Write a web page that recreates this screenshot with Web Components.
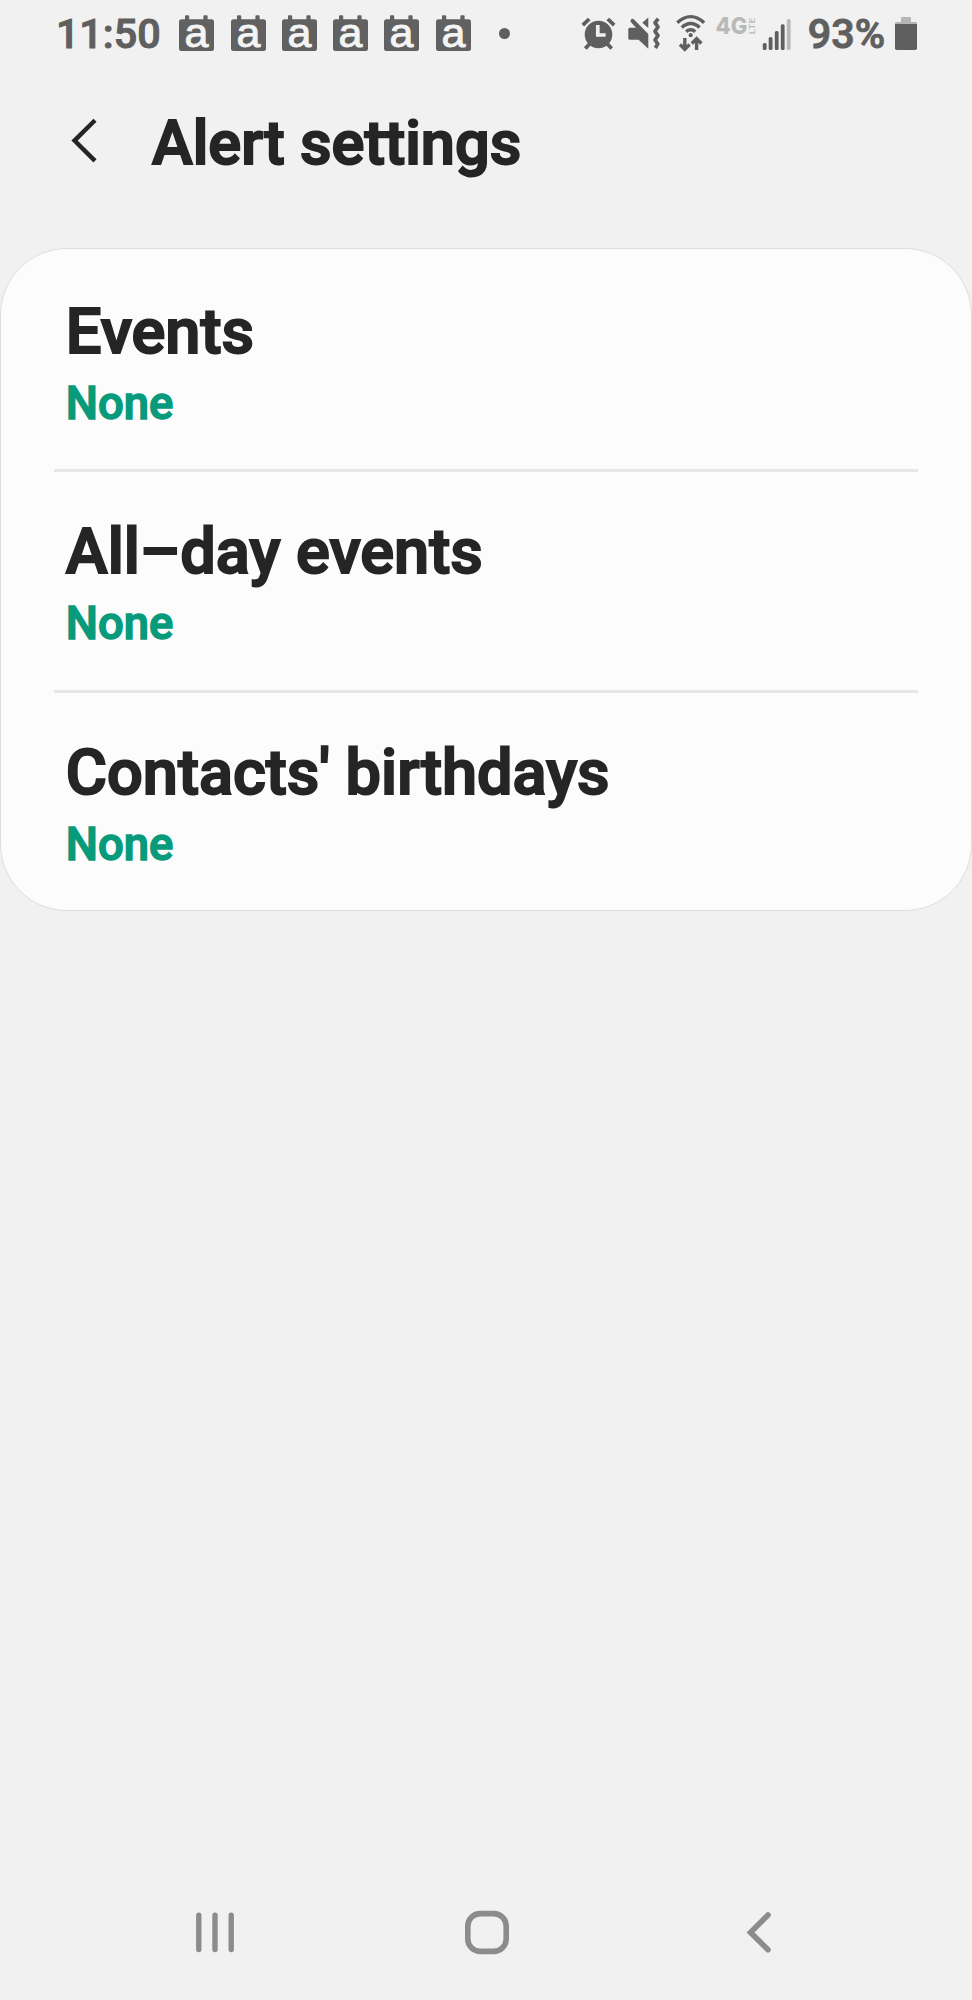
<!DOCTYPE html>
<html lang="en">
<head>
<meta charset="utf-8">
<title>Alert settings</title>
<style>
html,body{margin:0;padding:0;background:#f1f1f1}
body{font-family:Roboto,"Liberation Sans",sans-serif;color:#252525}
</style>
</head>
<body>
<phone-screen>
  <status-bar slot="top" time="11:50" battery="93%"></status-bar>
  <page-header slot="top">Alert settings</page-header>
  <settings-card>
    <setting-row>Events<span slot="value">None</span></setting-row>
    <setting-row divided>All–day events<span slot="value">None</span></setting-row>
    <setting-row divided>Contacts' birthdays<span slot="value">None</span></setting-row>
  </settings-card>
  <nav-bar slot="bottom"></nav-bar>
</phone-screen>
<script>
const define = (name, html) => customElements.define(name, class extends HTMLElement {
  constructor() {
    super();
    this.attachShadow({ mode: 'open' }).innerHTML = typeof html === 'function' ? html(this) : html;
  }
});

define('phone-screen', `
<style>
:host{display:flex;flex-direction:column;width:972px;height:2000px;background:#f1f1f1;overflow:hidden}
main{flex:1}
</style>
<slot name="top"></slot><main><slot></slot></main><slot name="bottom"></slot>`);

define('calendar-icon', `
<style>
:host{display:block;width:35px;height:37px}
svg{display:block;overflow:visible}
text{font:41px "Liberation Sans",Arial,sans-serif}
</style>
<svg width="35" height="37" viewBox="0 0 35 37">
  <path d="M2.5 4.2H6V1.2Q6 .3 7 .3H9.2Q10.2 .3 10.2 1.2V4.2H24.4V1.2Q24.4 .3 25.4 .3H27.6Q28.6 .3 28.6 1.2V4.2H32.5Q35 4.2 35 6.7V33.5Q35 36 32.5 36H2.5Q0 36 0 33.5V6.7Q0 4.2 2.5 4.2Z" fill="#616161"/>
  <text x="5.5" y="31.6" textLength="23.9" lengthAdjust="spacingAndGlyphs" fill="#f4f4f4" stroke="#f4f4f4" stroke-width=".9">a</text>
</svg>`);

define('status-bar', el => `
<style>
:host{display:flex;height:66px;box-sizing:border-box;padding:0 55.5px 0 55.9px;justify-content:space-between;color:#5f5f5f}
.left,.right{display:flex;align-items:flex-start}
.t{font-size:41.3px;font-weight:500;line-height:48px;margin-top:10.2px;-webkit-text-stroke:1px currentColor;white-space:nowrap}
.cals{display:flex;gap:16.3px;margin:15px 0 0 18.6px}
.dot{width:11px;height:11px;border-radius:50%;background:currentColor;margin:28px 0 0 27.8px}
svg{display:block;flex:none}
.g{font:800 23px Inter,"Liberation Sans",sans-serif}
.l{font:600 7.5px Inter,"Liberation Sans",sans-serif}
.pct{margin-left:15.8px}
.bat{margin:17px 0 0 9.4px}
</style>
<div class="left">
  <div class="t">${el.getAttribute('time')}</div>
  <div class="cals">${'<calendar-icon></calendar-icon>'.repeat(6)}</div>
  <div class="dot"></div>
</div>
<div class="right">
  <svg width="212" height="66" viewBox="580 0 212 66">
    <g fill="none" stroke="#5f5f5f">
      <circle cx="598.5" cy="34.5" r="13.8" fill="#5f5f5f" stroke="none"/>
      <path d="M582.8 25.2L589.2 19M614.2 25.2L607.8 19M585.3 48.5L590.5 43M611.7 48.5L606.5 43" stroke-width="3.8"/>
      <path d="M597.8 25V35H605.6" stroke="#f1f1f1" stroke-width="3.7"/>
    </g>
    <path d="M629.8 27.8H636L631 22.2Q629.8 20.6 631.2 19.2Q632.6 18.2 634 19.6L648.3 34V48.8L638.6 39.8H629.8Q628.3 39.8 628.3 38.3V29.3Q628.3 27.8 629.8 27.8Z" fill="#5f5f5f"/>
    <path d="M648.3 17.5V28L642.3 22.8Z" fill="#5f5f5f"/>
    <path d="M658.3 18.8L655 22.6L658 27L655 31.3L658 35.5L655 40L657.8 43.8L655.4 48" fill="none" stroke="#5f5f5f" stroke-width="3.7" stroke-linejoin="round"/>
    <g fill="none" stroke="#5f5f5f" stroke-width="3.4">
      <path d="M677.3 22.8Q683.5 16.6 690.7 16.6T704.1 22.8"/>
      <path d="M681.8 27.5Q685.8 23.5 690.7 23.5T699.6 27.5"/>
      <path d="M686.2 31.7Q688.2 29.8 690.7 29.8T695.2 31.7"/>
      <path d="M684.8 38V49M680 44.5L684.8 49.3L689.6 44.5M696.6 50V39M691.8 43.5L696.6 38.7L701.4 43.5"/>
    </g>
    <circle cx="690.7" cy="35.2" r="2.1" fill="#5f5f5f"/>
    <g fill="#b9b9b9">
      <text class="g" x="715.6" y="34.3" textLength="31.8" lengthAdjust="spacingAndGlyphs">4G</text>
      <text class="l" transform="translate(755 34.3) rotate(-90)" textLength="16.5" lengthAdjust="spacingAndGlyphs">LTE</text>
    </g>
    <g fill="#5f5f5f">
      <rect x="762.8" y="43" width="3.8" height="7" rx="1.5"/>
      <rect x="768.7" y="37" width="3.8" height="13" rx="1.5"/>
      <rect x="774.8" y="31" width="3.8" height="19" rx="1.5"/>
      <rect x="780.8" y="24.3" width="3.8" height="25.7" rx="1.5"/>
      <rect x="786.8" y="19" width="3.8" height="31" rx="1.5" fill="#b9b9b9"/>
    </g>
  </svg>
  <div class="t pct">${el.getAttribute('battery')}</div>
  <svg class="bat" width="22" height="34" viewBox="0 0 22 34">
    <path d="M6 1Q6 0 7 0H15Q16 0 16 1V5H20.5Q22 5 22 6.5V8H0V6.5Q0 5 1.5 5H6Z" fill="#b5b5b5"/>
    <path d="M0 7H22V31.2Q22 33 20.2 33H1.8Q0 33 0 31.2Z" fill="#5f5f5f"/>
  </svg>
</div>`);

define('page-header', `
<style>
:host{display:flex;height:182.4px;box-sizing:border-box;padding-left:71px;align-items:flex-start}
svg{display:block;margin-top:51px;flex:none}
h1{margin:40.2px 0 0 55.1px;font-size:61.3px;font-weight:500;line-height:74px;-webkit-text-stroke:2px currentColor;white-space:nowrap}
</style>
<svg width="26" height="48" viewBox="0 0 26 48"><path d="M24 3.3L3.5 23.6L24 43.9" fill="none" stroke="#252525" stroke-width="4.4"/></svg>
<h1><slot></slot></h1>`);

define('settings-card', `
<style>
:host{display:block;box-sizing:border-box;width:972px;height:663px;background:#fcfcfc;border:1px solid #dedede;border-radius:67px}
</style>
<slot></slot>`);

define('setting-row', `
<style>
:host{display:flex;flex-direction:column;position:relative;box-sizing:border-box;height:220.6px;padding:44.2px 53px 0 64.8px;gap:9px}
:host([divided])::before{content:"";position:absolute;left:53px;right:53px;top:-.5px;height:3px;background:#e7e7e7}
.title{font-size:63.1px;font-weight:500;line-height:74px;-webkit-text-stroke:2px currentColor;white-space:nowrap}
.value{font-size:45.4px;font-weight:500;line-height:54px;color:#079b7b;-webkit-text-stroke:1.5px currentColor}
</style>
<div class="title"><slot></slot></div>
<div class="value"><slot name="value"></slot></div>`);

define('nav-bar', `
<style>
:host{display:grid;grid-template-columns:268px 282px auto;height:136px;box-sizing:border-box;padding:44px 0 0 195px}
svg{display:block}
path,rect{fill:none;stroke:#8c8c8c}
</style>
<svg width="40" height="50" viewBox="195 1908 40 50"><path d="M198.8 1915.2V1949.6M215 1915.2V1949.6M231.2 1915.2V1949.6" stroke-width="5.4" stroke-linecap="round"/></svg>
<svg width="48" height="50" viewBox="463 1908 48 50"><rect x="467.8" y="1913.6" width="38.4" height="37.8" rx="12.5" stroke-width="5.6"/></svg>
<svg width="28" height="50" viewBox="745 1908 28 50"><path d="M768 1915L750.5 1932.4L768 1949.8" stroke-width="5.6" stroke-linecap="round"/></svg>`);
</script>
</body>
</html>
